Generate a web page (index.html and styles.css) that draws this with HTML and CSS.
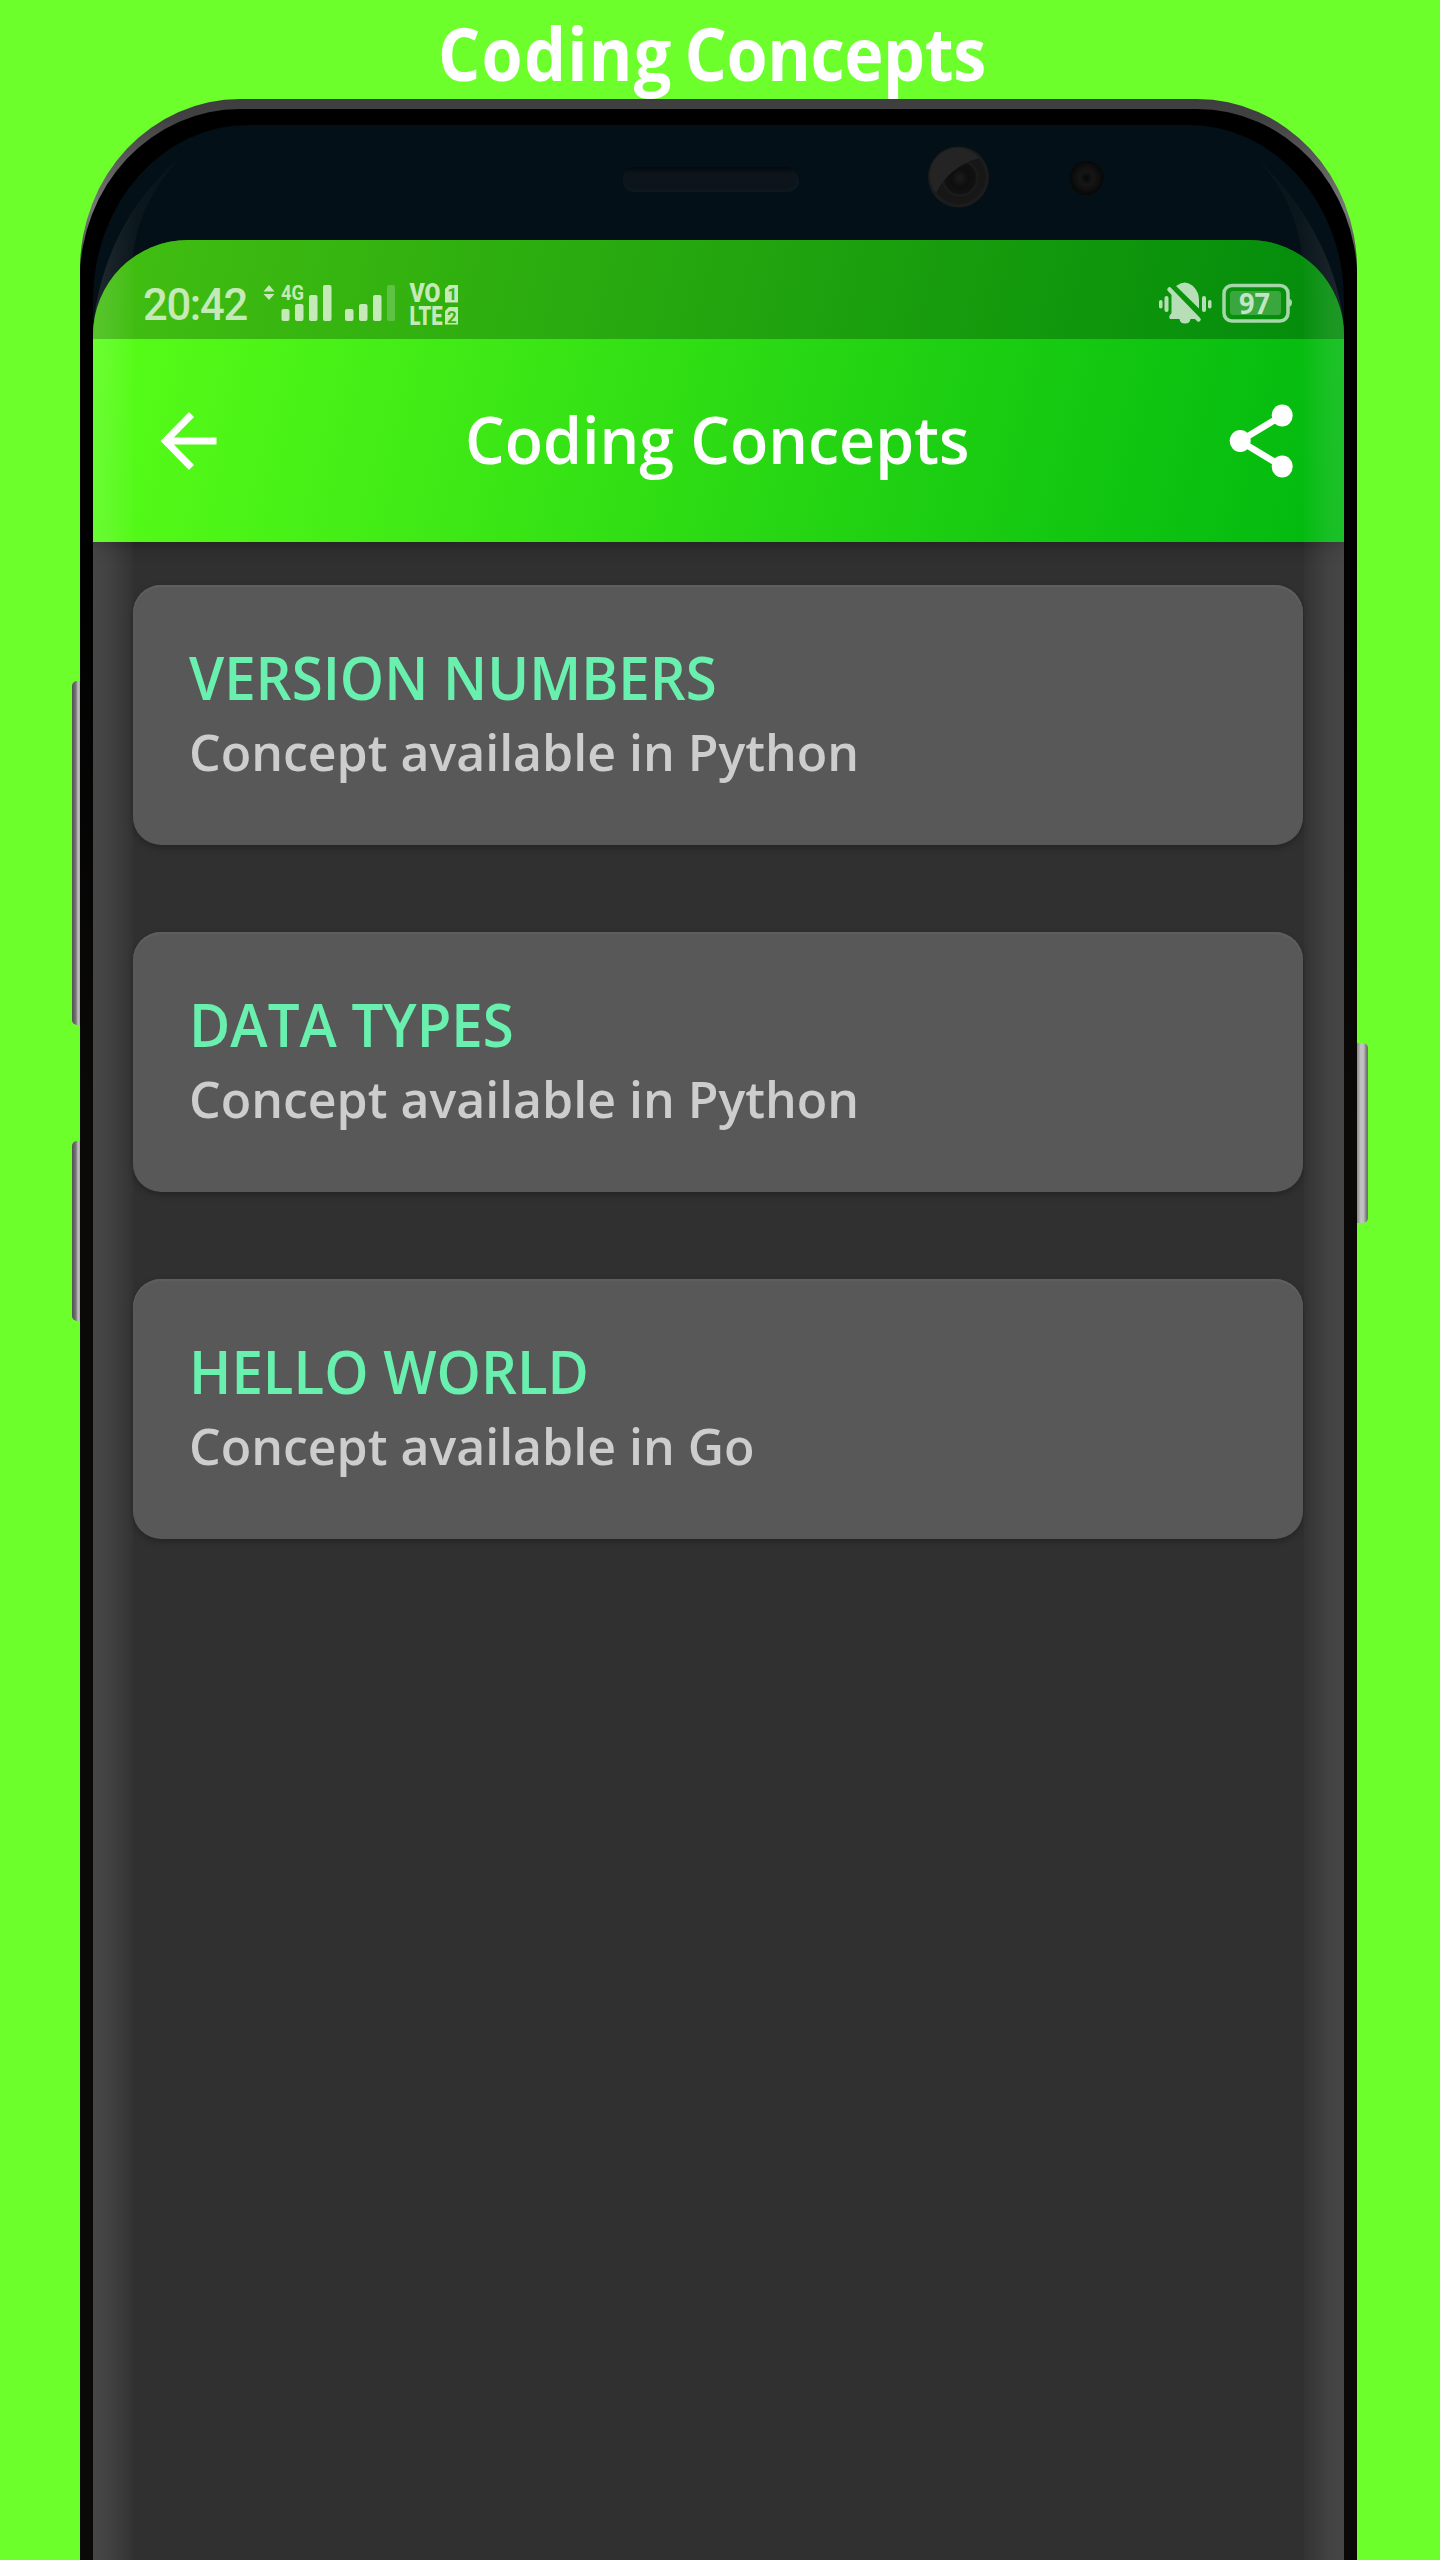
FILE: index.html
```
<!DOCTYPE html>
<html lang="en">
<head>
<meta charset="utf-8">
<title>Coding Concepts</title>
<link rel="stylesheet" href="styles.css">
</head>
<body>
<h1 class="headline"><span class="fit"><span class="wide">Coding</span> <span class="tight">Concepts</span></span></h1>
<main class="device">
  <i class="key key-volume"></i>
  <i class="key key-assist"></i>
  <i class="key key-power"></i>
  <div class="body">
    <div class="glass">
      <svg class="hardware" viewBox="0 0 1251 240" width="1251" height="240">
        <defs>
          <linearGradient id="shineL" x1="0" x2="1" y1="0" y2="0"><stop offset="0" stop-color="#202a31"/><stop offset=".5" stop-color="#0c171d"/><stop offset="1" stop-color="#08131a"/></linearGradient>
          <linearGradient id="shineR" x1="1" x2="0" y1="0" y2="0"><stop offset="0" stop-color="#1d272e"/><stop offset=".5" stop-color="#0c171d"/><stop offset="1" stop-color="#08131a"/></linearGradient>
          <radialGradient id="lens"><stop offset="0" stop-color="#1c1c1c"/><stop offset=".5" stop-color="#0e0e0e"/><stop offset=".85" stop-color="#111"/><stop offset="1" stop-color="#202020"/></radialGradient>
          <radialGradient id="sensor"><stop offset="0" stop-color="#060606"/><stop offset=".4" stop-color="#161616"/><stop offset=".75" stop-color="#0e0e0e"/><stop offset="1" stop-color="#060708"/></radialGradient>
          <linearGradient id="slot" x1="0" x2="0" y1="0" y2="1"><stop offset="0" stop-color="#03080d"/><stop offset=".3" stop-color="#0d151c"/><stop offset="1" stop-color="#0c141a"/></linearGradient>
        </defs>
        <path fill="url(#shineL)" d="M1 195C8 134 38 73 87 33C55 67 39 105 39 150V240H0Z"/>
        <path fill="url(#shineR)" d="M1250 195C1243 134 1208 73 1163 33C1195 67 1210 105 1210 150V240H1251Z"/>
        <rect x="530" y="45" width="176" height="22" rx="11" fill="#0b1820"/>
        <rect x="530" y="42" width="174" height="22" rx="11" fill="url(#slot)"/>
        <circle cx="865.500" cy="52" r="30.500" fill="#1c1c1c"/>
        <circle cx="865.500" cy="52" r="27" fill="#171717"/>
        <circle cx="867" cy="53" r="18" fill="url(#lens)"/>
        <path d="M843 68A27 27 0 0 1 886 33Q856 42 843 68Z" fill="#242424"/>
        <circle cx="993.500" cy="53" r="17" fill="url(#sensor)"/>
      </svg>
      <div class="screen">
        <header class="appbar">
          <div class="status">
            <span class="clock">20:42</span>
            <svg class="signals" width="200" height="50" viewBox="260 280 200 50" fill="#c5eab8">
              <path d="M263.500 291.500L269 285L274.500 291.500ZM263.500 294H274.500L269 300Z"/>
              <text x="281" y="299.500" class="net" textLength="23" lengthAdjust="spacingAndGlyphs">4G</text>
              <rect x="281.500" y="309" width="8" height="12" rx="2"/>
              <rect x="295" y="304" width="8.500" height="17" rx="2"/>
              <rect x="309" y="295" width="8.500" height="26" rx="2"/>
              <rect x="323" y="285" width="8.500" height="36" rx="2"/>
              <rect x="345" y="309" width="8.500" height="12" rx="2"/>
              <rect x="359" y="304" width="8.500" height="17" rx="2"/>
              <rect x="373" y="295" width="8.500" height="26" rx="2"/>
              <rect x="387" y="285" width="8" height="36" rx="2" opacity=".3"/>
              <text x="409.500" y="302" class="volte" textLength="31" lengthAdjust="spacingAndGlyphs">VO</text>
              <text x="409.500" y="324.500" class="volte" textLength="33" lengthAdjust="spacingAndGlyphs">LTE</text>
              <path d="M449 285H458V302.500H445V289ZM449 307H458V324.500H445V311Z"/>
              <text x="447.500" y="300" class="sim">1</text>
              <text x="447" y="322.500" class="sim">2</text>
            </svg>
            <svg class="alerts" width="136" height="46" viewBox="1157 280 136 46">
              <g fill="#b7dfb7">
                <rect x="1159" y="300" width="3.500" height="8.500" rx="1.700"/><rect x="1164.500" y="296" width="4" height="16" rx="2"/>
                <rect x="1202" y="296" width="4" height="16" rx="2"/><rect x="1208" y="300" width="3.500" height="8.500" rx="1.700"/>
                <path d="M1176 286Q1185 279 1193 286Q1199 292 1199 300V308.500ZM1171.500 294L1197 319H1190.500Q1190 323.500 1185 323.500T1179.500 319H1170Q1168.500 317 1170 315L1171.500 313Z"/>
              </g>
              <path d="M1169.500 289.500L1198.500 319.500" stroke="#b7dfb7" stroke-width="4.500" stroke-linecap="round"/>
              <rect x="1224" y="285.500" width="64" height="35.500" rx="8" fill="none" stroke="#a6d7aa" stroke-width="3.500"/>
              <path d="M1289 299Q1292 299 1292 302.500T1289 307Z" fill="#a6d7aa"/>
              <rect x="1230" y="291" width="51" height="24" rx="3" fill="#39a63e"/>
              <text x="1239" y="313.500" class="charge" fill="#c2e6c5" textLength="31" lengthAdjust="spacingAndGlyphs">97</text>
            </svg>
          </div>
          <div class="toolbar">
            <svg width="60" height="60" viewBox="0 0 60 60"><path d="M57.500 30H8M32.500 3.500L6.500 30L32.500 56.500" fill="none" stroke="#fff" stroke-width="7"/></svg>
            <span class="title">Coding Concepts</span>
            <svg width="64" height="76" viewBox="0 0 64 76" fill="#fff"><path d="M53.200 12.500L11 38L53.200 63.500" fill="none" stroke="#fff" stroke-width="6.500"/><ellipse cx="53.200" cy="12.500" rx="10.500" ry="11"/><ellipse cx="11.200" cy="38" rx="10.500" ry="11"/><ellipse cx="53.200" cy="63.500" rx="10.500" ry="11"/></svg>
          </div>
        </header>
        <section class="list">
          <article class="card"><h2>VERSION NUMBERS</h2><p>Concept available in Python</p></article>
          <article class="card"><h2>DATA TYPES</h2><p>Concept available in Python</p></article>
          <article class="card"><h2>HELLO WORLD</h2><p>Concept available in Go</p></article>
        </section>
        <i class="edge edge-left"></i>
        <i class="edge edge-right"></i>
      </div>
    </div>
  </div>
</main>
</body>
</html>
```
FILE: styles.css
```
* { box-sizing: border-box; }
body {
  margin: 0;
  width: 1440px;
  height: 2560px;
  overflow: hidden;
  background: #6cff2c;
  font-family: "Open Sans", "Noto Sans", sans-serif;
}
h1, h2, p { margin: 0; }
svg { display: block; flex: none; }
.headline {
  height: 99px;
  padding-left: 438px;
  color: #fff;
  font: 700 73px/105px "Open Sans", sans-serif;
  white-space: nowrap;
}
.headline .fit {
  display: inline-block;
  transform: scaleX(.91);
  transform-origin: 0 50%;
  word-spacing: -6px;
}
.headline .wide { letter-spacing: 1.4px; }
.headline .tight { letter-spacing: -.4px; }
.device {
  position: relative;
  width: 1277px;
  height: 2461px;
  margin-left: 80px;
}
.body {
  height: 100%;
  padding-top: 10px;
  border-radius: 160px 160px 0 0 / 170px 170px 0 0;
  background: linear-gradient(#3e3e3e, #424242 20px, #777 110px, #555 150px, #000 175px);
  overflow: hidden;
}
.glass {
  position: relative;
  height: 100%;
  padding: 131px 13px 0;
  border-radius: 160px 160px 0 0 / 170px 170px 0 0;
  background: linear-gradient(#000 400px, #0a0908 1000px);
}
.hardware {
  position: absolute;
  left: 13px;
  top: 16px;
  background: #031017;
  border-radius: 155px 155px 0 0 / 175px 175px 0 0;
}
.screen {
  position: relative;
  height: 100%;
  border-radius: 95px 95px 0 0;
  overflow: hidden;
  background: #303030;
}
.appbar {
  height: 302px;
  background: linear-gradient(103.6deg, #5aff18 0%, #00b80f 100%);
  box-shadow: 0 2px 16px rgba(0, 0, 0, .35);
  position: relative;
}
.status {
  display: flex;
  height: 99px;
  padding: 0 51px 0 50px;
  background: rgba(0, 0, 0, .25);
}
.clock {
  width: 117px;
  padding-top: 41px;
  color: #c5eab8;
  font: 500 43.5px/50px Roboto, sans-serif;
  letter-spacing: -1.3px;
}
.signals { margin-top: 40px; }
.alerts { margin: 40px 0 0 auto; }
.net { font: 700 20px Roboto, sans-serif; }
.volte { font: 900 25px Roboto, sans-serif; }
.sim { font: 700 17px Roboto, sans-serif; fill: #38b512; }
.charge { font: 700 29px "Noto Sans", sans-serif; }
.toolbar {
  display: flex;
  align-items: center;
  height: 203px;
  padding: 0 51px 0 66px;
}
.toolbar svg:last-child { margin-left: auto; }
.title {
  margin: -3px 0 0 246px;
  color: #fff;
  font-size: 65px;
  font-weight: 600;
  line-height: 90px;
  white-space: nowrap;
  transform: scaleX(.964);
  transform-origin: 0 50%;
}
.list {
  display: flex;
  flex-direction: column;
  gap: 87px;
  padding: 43px 41px 0 40px;
}
.card {
  height: 260px;
  padding: 54px 56px 0;
  border-radius: 28px;
  background: #585858;
  box-shadow: 0 3px 6px rgba(0, 0, 0, .25), inset 0 2px 2px #606060;
  white-space: nowrap;
}
.card h2 {
  color: #69f0ae;
  font-size: 59px;
  font-weight: 600;
  line-height: 76px;
  transform: scaleX(.956);
  transform-origin: 0 50%;
}
.card p {
  color: #cdcdcd;
  font-size: 50px;
  font-weight: 600;
  line-height: 74px;
}
.edge { position: absolute; top: 0; bottom: 0; width: 40px; }
.edge-left { left: 0; background: linear-gradient(90deg, rgba(255,255,255,.11), rgba(255,255,255,.085) 40%, rgba(255,255,255,.015)); }
.edge-right { right: 0; background: linear-gradient(270deg, rgba(255,255,255,.11), rgba(255,255,255,.085) 40%, rgba(255,255,255,.015)); }
.key { position: absolute; left: -8px; width: 8px; border-radius: 5px 0 0 5px; background: linear-gradient(90deg, #505050, #777 50%, #c0c0c0 75%, #aaa); }
.key-volume { top: 582px; height: 344px; }
.key-assist { top: 1042px; height: 180px; }
.key-power { left: 1277px; top: 944px; width: 11px; height: 180px; border-radius: 0 5px 5px 0; background: linear-gradient(90deg, #888, #c4c4c4 35%, #bdbdbd 60%, #707070 90%); }
```
